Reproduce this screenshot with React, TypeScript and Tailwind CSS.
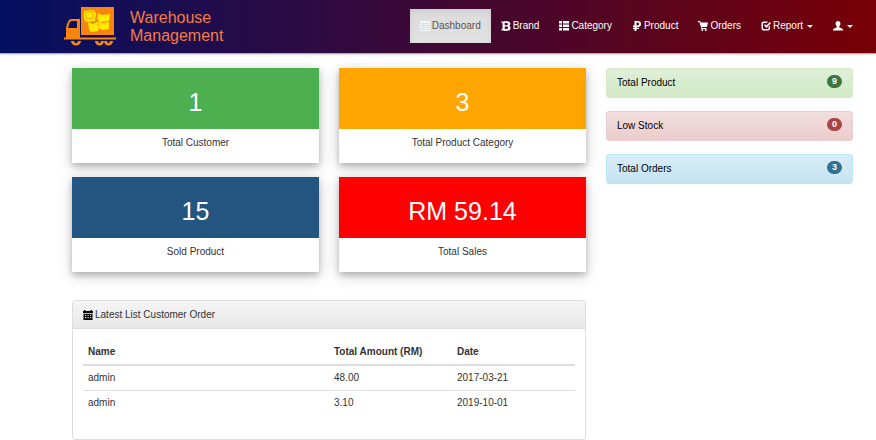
import type { ReactNode } from "react";

function Icon({ children, className = "" }: { children: ReactNode; className?: string }) {
  return (
    <svg viewBox="0 0 20 20" className={"size-[10px] shrink-0 " + className} fill="currentColor" aria-hidden="true">
      {children}
    </svg>
  );
}

const ListAlt = () => (
  <Icon className="text-[#f3f8fc]">
    <path fillRule="evenodd" d="M2 0h16a2 2 0 0 1 2 2v16a2 2 0 0 1-2 2H2a2 2 0 0 1-2-2V2a2 2 0 0 1 2-2zm0 4v14h16V4z" />
    <path d="M4 6h2v2H4zm4 0h8v2H8zM4 10h2v2H4zm4 0h8v2H8zM4 14h2v2H4zm4 0h8v2H8z" />
  </Icon>
);
const Bitcoin = () => (
  <Icon>
    <path fillRule="evenodd" d="M1 1h13c3 0 4.500 2 4.500 4.500 0 2-1 3.300-2.500 4 2 .7 3 2.200 3 4.300 0 3.200-2 5.200-5 5.200H1v-3h2V4H1zm6.500 3v4.500h4c3 0 3-4.500 0-4.500zm0 7.200v4.800h4.500c3 0 3-4.800 0-4.800z" />
    <path d="M6 0h2.500v2H6zM10.500 0H13v2h-2.500zM6 18h2.500v2H6zM10.500 18H13v2h-2.500z" />
  </Icon>
);
const ThList = () => (
  <Icon>
    <path d="M0 0h6v5H0zM8 0h12v5H8zM0 7h6v5H0zM8 7h12v5H8zM0 14h6v5H0zM8 14h12v5H8z" />
  </Icon>
);
const Ruble = () => (
  <Icon>
    <path fillRule="evenodd" d="M5 0h7.500C16 0 18 2.500 18 6s-2 6-5.500 6H9v1.500h5V16H9v4H5v-4H2v-2.500h3V12H2V9h3zm4 3v6h2.500c3.500 0 3.500-6 0-6z" />
  </Icon>
);
const Cart = () => (
  <Icon>
    <path d="M0 0h4.500l1 3H20l-2 9H8l.5 2H17v2H7L3 2.500H0z" />
    <circle cx="8.500" cy="18" r="2" />
    <circle cx="15.500" cy="18" r="2" />
  </Icon>
);
const Check = () => (
  <Icon>
    <path d="M5 1h9l-2.500 3H5.500Q4 4 4 5.500v9Q4 16 5.500 16h8q1.500 0 1.500-1.500V12l3-3v6q0 4-4 4H5q-4 0-4-4V5q0-4 4-4z" />
    <path d="M6 8.500l2.200-2.200 2.800 2.800L17.500 2 20 4.500 11 14z" />
  </Icon>
);
const User = () => (
  <Icon>
    <path d="M10 0c3 0 4.800 2 4.800 5.200 0 2.500-1 4.800-2.500 6v1.500l6.200 3c1 .5 1.500 1.300 1.500 2.300v1H0v-1c0-1 .5-1.800 1.500-2.300l6.200-3v-1.500c-1.500-1.200-2.500-3.500-2.500-6C5.200 2 7 0 10 0z" />
  </Icon>
);
const Calendar = () => (
  <Icon className="text-black">
    <path fillRule="evenodd" d="M2 0h3v2h10V0h3v2h2v4H0V2h2zM1 7.500h18V20H1zM4 9.500v2h2.500v-2zm5 0v2h2.500v-2zm5 0v2h2.500v-2zM4 14v2.500h2.500V14zm5 0v2.500h2.500V14zm5 0v2.500h2.500V14z" />
  </Icon>
);

const Caret = () => (
  <span className="ml-0.5 border-x-3 border-t-3 border-x-transparent border-t-current" aria-hidden="true" />
);

function Truck() {
  return (
    <svg viewBox="0 0 52 40" className="h-10 w-[52px] shrink-0" aria-hidden="true">
      <g fill="#f98510">
        <path d="M17 0h33v28H17z" />
        <path fillRule="evenodd" d="M2 31V21q1-5 3-8 1-1 3-1h8v19zM4 21h9v-7H8q-2 0-2.500 2z" />
        <path d="M0 30.500h52v2H0z" />
        <path d="M7 34h10a5 4.500 0 0 1-10 0zM31 34h9a4.500 4.500 0 0 1-9 0zM40 34h9a4.500 4.500 0 0 1-9 0z" />
      </g>
      <path fill="#11104f" d="M10 34h4a2 2 0 0 1-4 0zM34 34h3a1.500 2 0 0 1-3 0zM43 34h3a1.500 2 0 0 1-3 0z" />
      <g fill="#ffea00">
        <path d="M20 4l9-1 3 3-1 8-9 1-2-3z" />
        <path d="M34 6l4 2 8-1-1 7-9 1-3-3zM24 15l5 2 6-3 3 2 7-1v7l-7 1-3-2-1 3-7 1-2-3z" />
      </g>
      <path fill="none" stroke="#f98510" strokeWidth=".7" d="M21.500 5.500l7-1 1 6.500-7 1zM34 14l1 6" />
    </svg>
  );
}

const navItems = [
  { label: "Dashboard", icon: <ListAlt />, active: true },
  { label: "Brand", icon: <Bitcoin /> },
  { label: "Category", icon: <ThList /> },
  { label: "Product", icon: <Ruble /> },
  { label: "Orders", icon: <Cart /> },
];

const stats = [
  { value: "1", label: "Total Customer", color: "bg-[#4caf50]" },
  { value: "3", label: "Total Product Category", color: "bg-[#ffa500]" },
  { value: "15", label: "Sold Product", color: "bg-[#245580]" },
  { value: "RM 59.14", label: "Total Sales", color: "bg-[#ff0000]" },
];

const alerts = [
  { label: "Total Product", count: 9, box: "border-[#d6e9c6] from-[#dff0d8] to-[#d0e9c6]", badge: "bg-[#3c763d]" },
  { label: "Low Stock", count: 0, box: "border-[#ebccd1] from-[#f2dede] to-[#ebcccc]", badge: "bg-[#a94442]" },
  { label: "Total Orders", count: 3, box: "border-[#bce8f1] from-[#d9edf7] to-[#c4e3f3]", badge: "bg-[#31708f]" },
];

const orders = [
  { name: "admin", amount: "48.00", date: "2017-03-21" },
  { name: "admin", amount: "3.10", date: "2019-10-01" },
];

export default function App() {
  return (
    <div className="min-h-screen bg-white font-['Liberation_Sans',Arial,sans-serif] text-[10px] leading-[14px] text-[#333]">
      <header className="border-b border-[#b9a5b5] bg-linear-to-r/srgb from-[#041062] to-[#780006] shadow-sm">
        <div className="flex h-[53px] items-start justify-between pt-[7px] pr-[13px] pl-16">
          <a href="#home" className="flex items-center gap-[14px] text-base leading-[18px] text-[#f57c45]">
            <Truck />
            <span>
              Warehouse
              <br />
              Management
            </span>
          </a>
          <nav className="flex pt-0.5 text-white">
            {navItems.map((item) => (
              <a
                key={item.label}
                href={"#" + item.label.toLowerCase()}
                className={
                  "flex h-[34px] items-center gap-[2px] px-[10px] " +
                  (item.active ? "bg-linear-to-b from-[#dbdbdb] to-[#e2e2e2] text-[#555] shadow-[inset_0_2px_6px_rgba(0,0,0,0.08)]" : "")
                }
              >
                {item.icon}
                {item.label}
              </a>
            ))}
            <button type="button" className="flex h-[34px] items-center gap-[2px] px-[10px]">
              <Check />
              Report
              <Caret />
            </button>
            <button type="button" aria-label="Account" className="flex h-[34px] items-center gap-[2px] px-[10px]">
              <User />
              <Caret />
            </button>
          </nav>
        </div>
      </header>

      <main className="grid grid-cols-[514fr_247fr] items-start gap-x-5 pt-[14px] pr-[23px] pl-[72px]">
        <div>
          <div className="grid grid-cols-2 gap-x-5 gap-y-[14px]">
            {stats.map((s) => (
              <section key={s.label} className="text-center shadow-[0_3px_6px_rgba(0,0,0,0.2),0_4px_14px_rgba(0,0,0,0.19)]">
                <div className={"px-2 pt-[19px] pb-3 text-[25px] leading-[30px] text-white " + s.color}>{s.value}</div>
                <p className="bg-white px-2 pt-[7px] pb-[13px]">{s.label}</p>
              </section>
            ))}
          </div>

          <section className="mt-7 rounded-[3px] border border-[#ddd] pb-6">
            <h2 className="flex items-center gap-[2px] border-b border-[#ddd] bg-linear-to-b from-[#f5f5f5] to-[#e8e8e8] px-[10px] pt-[7px] pb-[6px]">
              <Calendar />
              Latest List Customer Order
            </h2>
            <div className="px-[10px] pt-[10px]">
              <table className="w-full table-fixed text-left">
                <thead>
                  <tr className="border-b-2 border-[#ddd]">
                    <th className="w-1/2 px-[5px] pt-[6px] pb-[5px] font-bold">Name</th>
                    <th className="w-1/4 px-[5px] pt-[6px] pb-[5px] font-bold">Total Amount (RM)</th>
                    <th className="w-1/4 px-[5px] pt-[6px] pb-[5px] font-bold">Date</th>
                  </tr>
                </thead>
                <tbody>
                  {orders.map((o) => (
                    <tr key={o.date} className="border-b border-[#ddd] last:border-b-0">
                      <td className="px-[5px] py-[5px]">{o.name}</td>
                      <td className="px-[5px] py-[5px]">{o.amount}</td>
                      <td className="px-[5px] py-[5px]">{o.date}</td>
                    </tr>
                  ))}
                </tbody>
              </table>
            </div>
          </section>
        </div>

        <aside className="grid gap-[13px]">
          {alerts.map((a) => (
            <a
              key={a.label}
              href="#details"
              className={"flex items-start justify-between rounded-[3px] border bg-linear-to-b px-[10px] py-[7px] text-black " + a.box}
            >
              {a.label}
              <span className={"-mt-px rounded-full px-[5px] text-[9px] leading-[13px] font-bold text-white " + a.badge}>{a.count}</span>
            </a>
          ))}
        </aside>
      </main>
    </div>
  );
}
